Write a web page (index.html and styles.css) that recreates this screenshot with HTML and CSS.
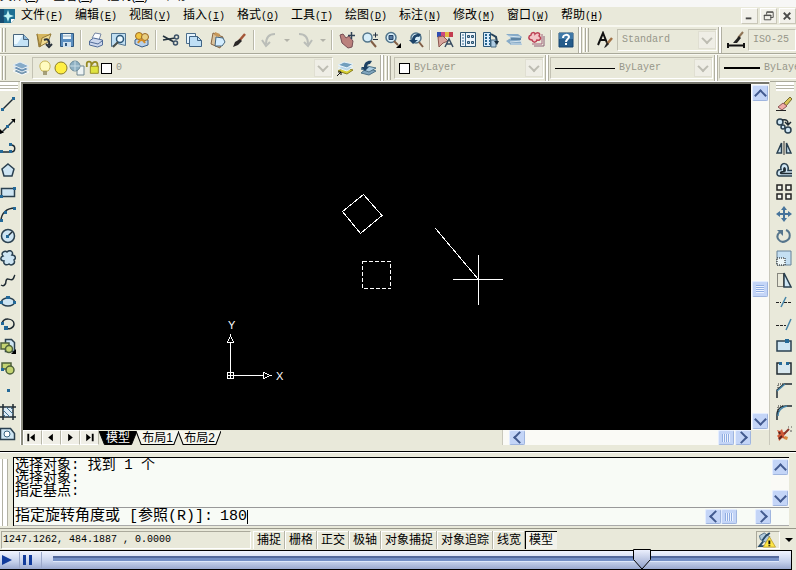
FILE: index.html
```html
<!DOCTYPE html>
<html lang="zh-CN">
<head>
<meta charset="utf-8">
<title>CAD</title>
<link rel="stylesheet" href="styles.css">
</head>
<body>
<nav class="outer-menu"><a href="#">文件(<u>F</u>)</a><a href="#">查看(<u>V</u>)</a><a href="#">控制(<u>C</u>)</a><a href="#">帮助</a></nav>

<header class="menubar">
  <svg class="app" viewBox="0 0 16 16"><path d="M0 1h15v10l-4 4H0z" fill="#1d6f93"/><path d="M0 1h4v14H0z" fill="#164b70"/><path d="M8 2l1.5 4.5L14 8l-4.500 1.500L8 14l-1.500-4.500L3 8l3.500-1.500z" fill="#bff2f4"/><path d="M11 15v-4h4z" fill="#fff"/></svg>
  <nav class="menus">
    <a href="#">文件<span>(<u>F</u>)</span></a><a href="#">编辑<span>(<u>E</u>)</span></a><a href="#">视图<span>(<u>V</u>)</span></a><a href="#">插入<span>(<u>I</u>)</span></a><a href="#">格式<span>(<u>O</u>)</span></a><a href="#">工具<span>(<u>T</u>)</span></a><a href="#">绘图<span>(<u>D</u>)</span></a><a href="#">标注<span>(<u>N</u>)</span></a><a href="#">修改<span>(<u>M</u>)</span></a><a href="#">窗口<span>(<u>W</u>)</span></a><a href="#">帮助<span>(<u>H</u>)</span></a>
  </nav>
  <div class="win">
    <button aria-label="最小化"><svg viewBox="0 0 16 16"><path d="M4 10h6" class="w"/></svg></button>
    <button aria-label="还原"><svg viewBox="0 0 16 16"><path d="M6 6V3.500h7V9h-3M3.500 6.500h7v5h-7zM6 3h7M3 7h8" class="w1"/></svg></button>
    <button aria-label="关闭"><svg viewBox="0 0 16 16"><path d="M4 4l7 7M11 4l-7 7" class="w"/></svg></button>
  </div>
</header>

<div class="toolbar">
  <i class="grip"></i>
  <button class="tb" aria-label="新建"><svg viewBox="0 0 18 18"><path d="M1.500 3.500h10l5 5v7h-15z" fill="#c4e2f6" stroke="#48657d"/><path d="M2 4h9l-6 9H2z" fill="#eefaff"/><path d="M11.500 3.500v5h5" fill="#8fbbdc" stroke="#48657d"/></svg></button>
  <button class="tb" aria-label="打开"><svg viewBox="0 0 18 18"><path d="M2 3l5 2 9-2-3 8-9 5z" fill="#f0dc92" stroke="#947a3a"/><path d="M2 3l3 13 2-9 9-4" fill="#d5b65e" stroke="#947a3a"/><path d="M9 9c4-2 6 1 5 5m-3-1l3 3 3-3" fill="none" stroke="#28313b" stroke-width="2"/></svg></button>
  <button class="tb" aria-label="保存"><svg viewBox="0 0 18 18"><path d="M2.500 2.500h13v13h-13z" fill="#5b8fc0" stroke="#31597f"/><path d="M5 3h8v5H5z" fill="#eff7fa"/><path d="M5 5h8" stroke="#91aabd"/><path d="M5 11h8v5H5z" fill="#d0e2ef"/><path d="M7 12h2v3H7z" fill="#31597f"/></svg></button>
  <i class="sep"></i>
  <button class="tb" aria-label="打印"><svg viewBox="0 0 18 18"><path d="M5 7l3-5 6 1-2 6z" fill="#fafcff" stroke="#7686a3"/><path d="M2.500 10l4-3 9 2v5l-5 2-8-2z" fill="#ccd7ec" stroke="#516c98"/><path d="M3 11l8 2 4-3" fill="none" stroke="#516c98"/></svg></button>
  <button class="tb" aria-label="打印预览"><svg viewBox="0 0 18 18"><path d="M1.500 2.500h14v12l-8-2-6 3z" fill="#c1dff2" stroke="#527591"/><circle cx="10" cy="8" r="3.500" fill="#ecf9ff" stroke="#2d5879" stroke-width="1.500"/><path d="M8 11l-5 5" stroke="#4b514c" stroke-width="2"/></svg></button>
  <button class="tb" aria-label="发布"><svg viewBox="0 0 18 18"><path d="M2 9l5-3 8 3v5l-6 2-7-3z" fill="#b8d1eb" stroke="#385c87"/><circle cx="6" cy="5" r="3.500" fill="#f1c540" stroke="#9b6825"/><circle cx="12" cy="6" r="3.500" fill="#e8ce80" stroke="#9b6825"/><path d="M5 12c2-4 5-4 7 0" fill="none" stroke="#d38c25" stroke-width="2"/></svg></button>
  <i class="sep"></i>
  <button class="tb" aria-label="剪切"><svg viewBox="0 0 18 18"><path d="M1 5l11 6M1 9l12-2" stroke="#26343f" stroke-width="1.500"/><circle cx="14.500" cy="6" r="2" fill="none" stroke="#3c5269" stroke-width="1.500"/><circle cx="13.500" cy="12" r="2" fill="none" stroke="#3c5269" stroke-width="1.500"/></svg></button>
  <button class="tb" aria-label="复制"><svg viewBox="0 0 18 18"><path d="M1.500 2.500h9v10h-9z" fill="#e6f5ff" stroke="#4b6d8a"/><path d="M4.500 5.500h8l4 4v6h-12z" fill="#bfdff5" stroke="#3f6384"/><path d="M12.500 5.500v4h4" fill="none" stroke="#3f6384"/></svg></button>
  <button class="tb" aria-label="粘贴"><svg viewBox="0 0 18 18"><path d="M5 2l10 4-3 11-9-4z" fill="#dac29b" stroke="#876440"/><path d="M8 6l7 1 2 4-3 4H7z" fill="#d3edff" stroke="#44657d"/><path d="M7 1l5 2-1 3-5-2z" fill="#c79758"/></svg></button>
  <button class="tb" aria-label="特性匹配"><svg viewBox="0 0 18 18"><path d="M14 3l-6 7" stroke="#a45638" stroke-width="2.500"/><path d="M9 8l2 2-4 4-5 2 2-5z" fill="#2a2828"/></svg></button>
  <i class="sep"></i>
  <button class="tb" aria-label="放弃"><svg viewBox="0 0 18 18" class="dim"><path d="M15 3C9 3 6 6 6 13" /><path d="M2 9l4 6 4-4"/></svg></button>
  <button class="dd" aria-label="放弃列表"></button>
  <button class="tb" aria-label="重做"><svg viewBox="0 0 18 18" class="dim"><path d="M3 3c6 0 9 3 9 10"/><path d="M8 11l4 4 4-6"/></svg></button>
  <button class="dd" aria-label="重做列表"></button>
  <i class="sep"></i>
  <button class="tb" aria-label="平移"><svg viewBox="0 0 18 18"><path d="M2 4l3-1 3 4 3-2 4 5-1 6-4 1-6-5z" fill="#bb817d" stroke="#764e55"/><path d="M13.500 1v7M10 4.500h7" stroke="#304256" stroke-width="1.500"/></svg></button>
  <button class="tb" aria-label="实时缩放"><svg viewBox="0 0 18 18"><circle cx="6.500" cy="6.500" r="4.500" class="lens"/><path d="M10 10l5 6" class="handle"/><path d="M12 4h5M14.500 1.500v5M12 8.500h5" stroke="#223041"/></svg></button>
  <button class="tb" aria-label="窗口缩放"><svg viewBox="0 0 18 18"><circle cx="7" cy="6.500" r="5" class="lens"/><path d="M5 4.500h4v4H5z" fill="#5579a0" stroke="#284668"/><path d="M10 10l4 4" class="handle"/><path d="M17 12v5h-5z"/></svg></button>
  <button class="tb" aria-label="缩放上一个"><svg viewBox="0 0 18 18"><circle cx="9" cy="7" r="5" class="lens"/><path d="M12 11l4 5" class="handle"/><path d="M5 9c0-5 5-7 9-6l-2 3c-3-1-4 1-4 3h3l-5 4-4-4z" fill="#1d4469"/></svg></button>
  <i class="sep"></i>
  <button class="tb" aria-label="特性"><svg viewBox="0 0 18 18"><path d="M1 1h4v5H1z" fill="#304fb3"/><path d="M5 1h4v5H5z" fill="#cd477f"/><path d="M9 1h4v5H9z" fill="#e1b942"/><path d="M13 1h4v5h-4z" fill="#c43d50"/><path d="M2 6l5-1 5 5-5 2-4 4z" fill="#d8a59c" stroke="#8a554f"/><path d="M9 16l4-8 4 8M11 13h4" fill="none" stroke="#374b61" stroke-width="1.500"/></svg></button>
  <button class="tb" aria-label="设计中心"><svg viewBox="0 0 18 18"><path d="M1.500 1.500h15v14h-15z" fill="#eef5fb" stroke="#2d536d"/><path d="M6.500 2v13M3 4h2M3 7h2M3 10h2M3 13h2" stroke="#376b8e"/><path d="M8.500 4.500h2v2h-2zm4 0h2v2h-2zm-4 6h2v2h-2zm4 0h2v2h-2z" fill="#8eb9d9" stroke="#2d536d"/></svg></button>
  <button class="tb" aria-label="工具选项板"><svg viewBox="0 0 18 18"><path d="M1.500 1.500h7v14h-7z" fill="#d8ecfb" stroke="#2a587b"/><path d="M3 4h2m2 0h1M3 7h2m2 0h1M3 10h2m2 0h1M3 13h2m2 0h1" stroke="#27658f" stroke-width="2"/><path d="M9 3l5 3 1 5" fill="none" stroke="#28445b" stroke-width="2"/><path d="M9 9h5v7H9z" fill="#afcde4" stroke="#496a82"/><path d="M12 10h5l-2 4z" fill="#172c3d"/></svg></button>
  <button class="tb" aria-label="图纸集"><svg viewBox="0 0 18 18"><path d="M1 3h12l4 3-2 3 2 5H6l-5-4 5-3z" fill="#87abc8"/><path d="M2 5l13 1M5 11l12-1M6 13h11" stroke="#d6e5ee"/><path d="M6 8h10" stroke="#5e84a3" stroke-width="2"/></svg></button>
  <button class="tb" aria-label="标记集"><svg viewBox="0 0 18 18"><path d="M6 15h10V5" fill="none" stroke="#8c6175"/><path d="M4 13h10V3" fill="none" stroke="#a5637c"/><path d="M3 4c0-3 4-3 4-1 3-3 6 0 4 2 3 2 1 5-2 4-1 3-4 3-5 0-4 0-4-4-1-5z" fill="#f3c5c7" stroke="#bd4155" stroke-width="1.500"/></svg></button>
  <i class="sep"></i>
  <button class="tb" aria-label="帮助"><svg viewBox="0 0 18 18"><path d="M2 2h14v14H2z" fill="#245b8a" stroke="#17456f"/><path d="M2 2h14v6H2z" fill="#3f78a7"/><path d="M6 7c0-4 6-4 6-1 0 2-3 2-3 5m0 1v2" fill="none" stroke="#fff" stroke-width="2"/></svg></button>
  <i class="edge"></i><i class="grip"></i>
  <button class="tb wide" aria-label="文字样式"><svg viewBox="0 0 18 18"><path d="M2 14L7 2l4 10M4 9h6" fill="none" stroke="#111" stroke-width="2"/><path d="M16 7l-5 6" stroke="#a17145" stroke-width="2.500"/><path d="M11 11l2 2-3 3-2 1z" fill="#222"/></svg></button>
  <label class="combo std"><select disabled aria-label="文字样式"><option>Standard</option></select><i class="drop"></i></label>
  <i class="edge"></i>
  <button class="tb wide" aria-label="标注样式"><svg viewBox="0 0 18 18"><path d="M1 12v5m16-5v5M2 14.500h14" stroke="#111" stroke-width="2"/><path d="M16 1l-5 6" stroke="#8e7355" stroke-width="2"/><path d="M12 5l2 2-4 5H6z" fill="#222"/></svg></button>
  <label class="combo rest"><select disabled aria-label="标注样式"><option>ISO-25</option></select></label>
</div>

<div class="toolbar">
  <i class="grip"></i>
  <button class="tb" aria-label="图层特性"><svg viewBox="0 0 18 18"><path d="M1 12l7-3 9 4-7 3z" fill="#7697b0" stroke="#fff"/><path d="M1 9l7-3 9 4-7 3z" fill="#6b91b3" stroke="#e5eef5"/><path d="M1 6l7-3 9 4-7 3z" fill="#86abc9" stroke="#e5eef5"/></svg></button>
  <label class="combo layer">
    <svg viewBox="0 0 16 18"><path d="M5 12C1 8 3 2 8 2s7 6 3 10z" fill="#fffbc0" stroke="#c8b657"/><path d="M6 13h4M6 15h4" stroke="#8f865b" stroke-width="1.500"/></svg>
    <svg viewBox="0 0 16 18"><circle cx="8" cy="9" r="6" fill="#ffef43" stroke="#8b7c27"/></svg>
    <svg viewBox="0 0 16 18"><path d="M8 7h7v9H8z" fill="#eef4f4" stroke="#718791"/><circle cx="6" cy="7" r="5" fill="#8eb0c3" stroke="#6d8c9c"/><path d="M6 2v10M1 7h10" stroke="#c7dce5"/></svg>
    <svg viewBox="0 0 18 18"><path d="M2 8V4c0-3 5-3 5 0v5M8 5c1-4 6-4 6 0v4" fill="none" stroke="#968a22" stroke-width="2"/><path d="M6 7h9v8H6z" fill="#dfe340" stroke="#90871d"/></svg>
    <i class="swatch"></i>
    <select disabled aria-label="图层"><option>0</option></select><i class="drop"></i>
  </label>
  <button class="tb" aria-label="置为当前"><svg viewBox="0 0 18 18"><path d="M2 12l6-3 9 2-6 4z" fill="#d7cf32" stroke="#897f20"/><path d="M2 9l6-3 9 2-6 4z" fill="#b9d7e9" stroke="#e8f4fb"/><path d="M2 6l6-3 9 2-6 4z" fill="#729fbd" stroke="#e8f4fb"/><path d="M1 17l4-4M2 13h3v3" fill="none" stroke="#111"/></svg></button>
  <button class="tb" aria-label="上一个图层"><svg viewBox="0 0 18 18"><path d="M2 14l6-5 9 3-7 4z" fill="#80a5bd" stroke="#4d7186"/><path d="M2 10l6-3 9 2-7 4z" fill="#abcce0" stroke="#4d7186"/><path d="M5 8c0-5 4-7 8-6l-2 3c-2 0-3 1-3 3h2l-4 4-4-4z" fill="#1d4264"/></svg></button>
  <i class="edge"></i><i class="grip"></i>
  <label class="combo color"><i class="swatch"></i><select disabled aria-label="颜色"><option>ByLayer</option></select><i class="drop"></i></label>
  <i class="edge"></i>
  <label class="combo ltype"><i class="rule"></i><select disabled aria-label="线型"><option>ByLayer</option></select><i class="drop"></i></label>
  <i class="edge"></i>
  <label class="combo rest"><i class="rule thick"></i><select disabled aria-label="线宽"><option>ByLayer</option></select></label>
</div>

<main class="work">
  <aside class="side left"><i class="hgrip"></i>
    <button aria-label="直线"><svg viewBox="0 0 16 16"><path d="M2 14L14 2" class="k"/><path d="M1 12h3v3H1zM12 1h3v3h-3z" class="p"/></svg></button>
    <button aria-label="构造线"><svg viewBox="0 0 16 16"><path d="M0 16L15 1" class="k"/><path d="M15 1v4l-4-4zM0 15v-4l4 4z"/><path d="M6 7h3v3H6z" class="p"/></svg></button>
    <button aria-label="多段线"><svg viewBox="0 0 16 16"><path d="M1 12h10c5 0 5-7 0-7" class="k"/><path d="M0 10h3v3H0zM9 10h3v3H9zM9 3h3v3H9z" class="p"/></svg></button>
    <button aria-label="正多边形"><svg viewBox="0 0 16 16"><path d="M8 2l6 5-2 7H4L2 7z" class="f"/></svg></button>
    <button aria-label="矩形"><svg viewBox="0 0 16 16"><path d="M1.500 4.500h13v8h-13z" class="f"/><path d="M0 11h3v3H0zM13 3h3v3h-3z" class="p"/></svg></button>
    <button aria-label="圆弧"><svg viewBox="0 0 16 16"><path d="M1 15C1 7 7 2 15 2" class="k"/><path d="M0 13h3v3H0zM4 5h3v3H4zM13 1h3v3h-3z" class="p"/></svg></button>
    <button aria-label="圆"><svg viewBox="0 0 16 16"><circle cx="8" cy="8" r="6.500" class="f"/><path d="M7 9l5-5" class="k"/><path d="M6 7h3v3H6z" class="p"/></svg></button>
    <button aria-label="修订云线"><svg viewBox="0 0 16 16"><path d="M3 6C0 3 5 0 7 2c3-3 7 0 5 3 4 0 4 4 2 5 2 4-3 6-5 4-3 2-6 0-5-3-4 0-4-4-1-5z" class="f"/></svg></button>
    <button aria-label="样条曲线"><svg viewBox="0 0 16 16"><path d="M1 13c3 2 5-1 5-4 1-5 5 1 7-2 1-1 1-3 2-4" class="k"/></svg></button>
    <button aria-label="椭圆"><svg viewBox="0 0 16 16"><ellipse cx="8" cy="8" rx="6.500" ry="4" class="f"/><path d="M0 7h3v3H0zM13 7h3v3h-3zM6 2h4v3H6z" class="p"/></svg></button>
    <button aria-label="椭圆弧"><svg viewBox="0 0 16 16"><path d="M2 8c1-7 12-6 12 0 0 4-5 6-9 4" class="k"/><path d="M1 6h3v3H1zM4 10h4v4H4z" class="p"/></svg></button>
    <button aria-label="插入块"><svg viewBox="0 0 16 16"><path d="M5.500 1.500h6l3 3v9h-9z" class="f"/><path d="M1 5h8v6H1z" class="g"/><circle cx="9" cy="11" r="3.500" class="g"/><path d="M16 11v5h-5z"/></svg></button>
    <button aria-label="创建块"><svg viewBox="0 0 16 16"><path d="M2 3h9v6H2z" class="g"/><circle cx="10" cy="10" r="4" class="g"/><path d="M1 8h3v3H1z" class="p"/></svg></button>
    <button aria-label="点"><svg viewBox="0 0 16 16"><path d="M7 7h3v3H7z" class="p"/></svg></button>
    <button aria-label="图案填充"><svg viewBox="0 0 16 16"><path d="M3 3h10v10H3z" fill="#dceaf4"/><path d="M3 0v16M13 0v16M0 3h16M0 13h16" class="k"/><path d="M3 6l7 7M3 10l3 3M6 3l7 7M10 3l3 3" stroke="#427291"/></svg></button>
    <button aria-label="面域"><svg viewBox="0 0 16 16"><path d="M.5 2.500h10l4 5v6H.500z" class="f"/><circle cx="7" cy="8" r="3" fill="#fff" stroke="#396582"/></svg></button>
  </aside>

  <section class="doc">
    <div class="view">
      <svg class="drawing" aria-label="绘图区">
        <g fill="none" stroke="#fff" shape-rendering="crispEdges">
          <path d="M339.500 110.500L358 131.500L336.500 149.500L318.500 127.500z"/>
          <path d="M338.500 177.500h28v27h-28z" stroke-dasharray="4 2"/>
          <path d="M411.500 144.500L454.500 195.500M429 195.500h50M454.500 171v50"/>
          <path d="M203.500 288.500h6v6h-6zM203 291.500h36M206.500 295V259M203.500 258.500h6l-3-7zM239.500 288.500v6l7-3z"/>
        </g>
        <text x="204" y="245">Y</text><text x="252" y="296">X</text>
      </svg>
      <div class="vscroll"><button class="sb up" aria-label="向上"></button><i class="sb thumb v"></i><button class="sb down" aria-label="向下"></button></div>
    </div>
    <div class="sheets">
      <div class="steps">
        <button aria-label="第一个"><svg viewBox="0 0 16 14"><path d="M3 3h2v8H3zM11 3v8L6 7z"/></svg></button>
        <button aria-label="上一个"><svg viewBox="0 0 16 14"><path d="M10 3v8L5 7z"/></svg></button>
        <button aria-label="下一个"><svg viewBox="0 0 16 14"><path d="M6 3v8l5-4z"/></svg></button>
        <button aria-label="最后一个"><svg viewBox="0 0 16 14"><path d="M5 3v8l5-4zM11 3h2v8h-2z"/></svg></button>
      </div>
      <div class="tabs">
        <button class="on"><svg viewBox="0 0 42 14" preserveAspectRatio="none"><path d="M0 0h42l-6 13.500H6z" fill="#000"/></svg><span>模型</span></button>
        <button><svg viewBox="0 0 42 14" preserveAspectRatio="none"><path d="M0 0l5 13.500h32L42 0"/></svg><span>布局1</span></button>
        <button><svg viewBox="0 0 42 14" preserveAspectRatio="none"><path d="M0 0l5 13.500h32L42 0"/></svg><span>布局2</span></button>
      </div>
      <div class="hscroll"><button class="sb lt" aria-label="向左"></button><i class="sb thumb h"></i><button class="sb rt" aria-label="向右"></button></div>
    </div>
  </section>

  <aside class="side right"><i class="hgrip"></i>
    <button aria-label="删除"><svg viewBox="0 0 16 16"><path d="M8 7l6-6 2 2-6 7z" fill="#d9c455" stroke="#746b30"/><path d="M2 11l5-4 4 3-5 4z" fill="#f1aca8" stroke="#8e5656"/><path d="M0 14.500h10" stroke="#222"/></svg></button>
    <button aria-label="复制对象"><svg viewBox="0 0 16 16"><circle cx="4" cy="4" r="3" class="f"/><circle cx="7" cy="9" r="2" class="f"/><circle cx="12" cy="12" r="3" class="f"/><path d="M6 2c5-1 6 1 6 4M9 4l3 3 3-3" class="k"/></svg></button>
    <button aria-label="镜像"><svg viewBox="0 0 16 16"><path d="M5.500 3v10H1zM10.500 3v10H15z" class="f"/><path d="M8 1v14" stroke="#333"/></svg></button>
    <button aria-label="偏移"><svg viewBox="0 0 16 16"><path d="M16 8.500h-4c2-9-9-9-7-1C0 7 0 14 3 14h13" class="f"/><path d="M16 11.500H5c-1-1 0-2 3-2-1-5 2-5 1 0" class="k"/></svg></button>
    <button aria-label="阵列"><svg viewBox="0 0 16 16"><path d="M1 1h5v5H1zM10 1h5v5h-5zM1 10h5v5H1zM10 10h5v5h-5z" fill="#f2f4ed" stroke="#222" stroke-width="1.500"/></svg></button>
    <button aria-label="移动"><svg viewBox="0 0 16 16"><path d="M8 0l3 4H9v3h3V5l4 3-4 3V9H9v3h2l-3 4-3-4h2V9H4v2L0 8l4-3v2h3V4H5z" fill="#46739b"/></svg></button>
    <button aria-label="旋转"><svg viewBox="0 0 16 16"><path d="M4 4c-6 5 0 12 6 9 5-2 5-9 0-11" fill="none" stroke="#56758c" stroke-width="2"/><path d="M1 2h6v6z" fill="#56758c"/></svg></button>
    <button aria-label="缩放"><svg viewBox="0 0 16 16"><path d="M1 1h14v14H1z" fill="#c4dff2" stroke="#668298"/><path d="M1 8h8v7H1z" fill="#eef7f8" stroke="#111" stroke-dasharray="1 1"/></svg></button>
    <button aria-label="拉伸"><svg viewBox="0 0 16 16"><path d="M8 1l7 14H8z" class="f"/><path d="M1.500 1.500h6v13h-6z" fill="none" stroke="#222" stroke-dasharray="1 1"/></svg></button>
    <button aria-label="修剪"><svg viewBox="0 0 16 16"><path d="M0 8.500h5m3 0h8" stroke="#222" stroke-dasharray="3 1"/><path d="M10 3L5 13" class="p2"/></svg></button>
    <button aria-label="延伸"><svg viewBox="0 0 16 16"><path d="M0 9.500h10" stroke="#222" stroke-dasharray="3 1"/><path d="M15 3l-5 11" class="p2"/></svg></button>
    <button aria-label="打断于点"><svg viewBox="0 0 16 16"><path d="M1 3h14v10H1z" class="f"/><path d="M9 1h4v4H9z" class="p"/></svg></button>
    <button aria-label="打断"><svg viewBox="0 0 16 16"><path d="M2 4h12v9H2z" fill="#d8e8ef"/><path d="M4 3H1v11h14V3h-3" class="k"/><path d="M3 2h3v3H3zM10 2h3v3h-3z" class="p"/></svg></button>
    <button aria-label="倒角"><svg viewBox="0 0 16 16"><path d="M1 16V8l7-6h8" class="k"/><path d="M2 8V2h6" fill="none" stroke="#222" stroke-dasharray="1 1"/><path d="M1 9l8-7" class="p2"/></svg></button>
    <button aria-label="圆角"><svg viewBox="0 0 16 16"><path d="M1 16v-5c0-6 4-9 9-9h6" class="k"/><path d="M2 12c0-6 4-9 9-10" class="p2"/><path d="M2 8V2h6" fill="none" stroke="#222" stroke-dasharray="1 1"/></svg></button>
    <button aria-label="分解"><svg viewBox="0 0 16 16"><path d="M1 4l3 1 2-2 1 3 3 1-2 3 2 3-4-1-3 3-1-4-1-1 2-2z" fill="#cf5937"/><path d="M9 10l3 1-1 3-3-1z" fill="#d78a3c"/><path d="M3 6l1 2M3 13l3-3" stroke="#5b241d" stroke-width="2"/><path d="M8 8l5-5" stroke="#8b3427" stroke-width="2"/><path d="M12 1h1m2 0h1m-2 4h2" stroke="#555"/></svg></button>
  </aside>
</main>

<section class="command">
  <i class="vgrip"></i>
  <div class="console">
    <div class="history"><p>选择对象: 找到 1 个<br>选择对象:<br>指定基点:</p><div class="vscroll"><button class="sb up" aria-label="向上"></button><button class="sb down" aria-label="向下"></button></div></div>
    <div class="prompt"><label for="cmd">指定旋转角度或 [参照(R)]:</label><span class="entry"><input id="cmd" size="3" value="180"></span><div class="pscroll"><button class="sb lt" aria-label="向左"></button><i class="sb thumb h"></i><button class="sb rt" aria-label="向右"></button></div></div>
  </div>
</section>

<footer class="status">
  <output>1247.1262, 484.1887 , 0.0000</output>
  <div class="modes"><button>捕捉</button><button>栅格</button><button>正交</button><button>极轴</button><button>对象捕捉</button><button>对象追踪</button><button>线宽</button><button class="pressed">模型</button></div>
  <div class="tray"><svg viewBox="0 0 20 18"><path d="M2 4l5-3 6 4-4 6-6-3z" fill="#b1cadb" stroke="#547186"/><path d="M5 9l4-5 4-3M6 10l-4 5h6" fill="none" stroke="#274967" stroke-width="2"/><path d="M12.500 5L19 16H6z" fill="#ffe743" stroke="#c1a638"/><path d="M12.500 9v4m0 1v1" stroke="#111" stroke-width="2"/></svg></div>
  <button class="more" aria-label="状态栏菜单"></button>
</footer>

<div class="player">
  <button class="play" aria-label="播放"><svg viewBox="0 0 16 16"><path d="M2 3l10 5-10 5z" fill="#123c9c"/></svg></button>
  <button class="pause" aria-label="暂停"><svg viewBox="0 0 16 16"><path d="M3 3h3v10H3zM9 3h3v10H9z" fill="#123c9c"/></svg></button>
  <input type="range" min="0" max="1000" value="819" aria-label="进度">
</div>
</body>
</html>
```
FILE: styles.css
```css
* { box-sizing: border-box; }
body {
  margin: 0;
  height: 100vh;
  display: flex;
  flex-direction: column;
  overflow: hidden;
  background: #e9e9da;
  color: #000;
  font: 12px/14px "Liberation Sans", "Noto Sans CJK SC", sans-serif;
}
button { margin: 0; padding: 0; border: 0; background: none; color: inherit; font: inherit; flex: none; }
svg { display: block; flex: none; }
a { color: inherit; text-decoration: none; white-space: nowrap; }
i { flex: none; }

.outer-menu {
  height: 7px;
  flex: none;
  display: flex;
  align-items: flex-end;
  gap: 14px;
  padding-bottom: 4px;
  overflow: hidden;
  background: #f7f7f6;
}
.menubar { flex: none; height: 19px; display: flex; align-items: center; border-bottom: 1px solid #f8f8f0; }
.app { width: 16px; height: 16px; margin-right: 5px; }
.menus { display: grid; grid-template-columns: repeat(11, 54px); flex: 1; }
.menus span { font: 10px/14px "Liberation Mono", monospace; }
.win { display: flex; gap: 2px; }
.win button { width: 17px; height: 16px; background: #f2f1ea; border: 1px solid #fff; border-right-color: #c9c7b8; border-bottom-color: #c9c7b8; }
.w { fill: none; stroke: #4a4a48; stroke-width: 2; }
.w1 { fill: none; stroke: #4a4a48; }

.toolbar {
  flex: none;
  height: 28px;
  display: flex;
  align-items: center;
  border-top: 1px solid #f8f8f0;
  border-bottom: 1px solid #a9a99a;
  overflow: hidden;
}
.grip { width: 9px; height: 24px; background: linear-gradient(90deg, #fff 1px, transparent 1px 2px, #aaa99b 2px 3px, #fff 3px 4px, transparent 4px 5px, #aaa99b 5px 6px, transparent 6px); }
.tb { width: 23px; height: 22px; display: grid; place-items: center; }
.tb svg { width: 18px; height: 18px; }
.wide { width: 25px; }
.sep { width: 6px; height: 20px; background: linear-gradient(90deg, transparent 2px, #b9b8a9 2px 3px, #fff 3px 4px, transparent 4px); }
.dim { fill: none; stroke: #babdb8; stroke-width: 2; }
.lens { fill: #d7eef9; stroke: #52758b; stroke-width: 1.500; }
.handle { fill: none; stroke: #815e45; stroke-width: 2; }
.dd { width: 13px; height: 20px; display: grid; place-items: center; }
.dd::after { content: ""; border: 3px solid transparent; border-top-color: #b3b3a9; border-bottom: 0; }
.edge { width: 6px; height: 26px; background: linear-gradient(90deg, transparent 1px, #b1b0a2 1px 2px, #fff 2px 4px, #b1b0a2 4px 5px, transparent 5px); }
.combo { height: 22px; display: flex; align-items: center; padding-left: 4px; border: 1px solid #c3c2b3; border-right-color: #fff; border-bottom-color: #fff; flex: none; }
.combo select { appearance: none; flex: 1; min-width: 0; padding: 0; border: 0; background: none; color: #969689; opacity: 1; font: 10px/14px "Liberation Mono", monospace; }
.combo svg { width: 16px; height: 18px; }
.std { width: 100px; }
.layer { width: 301px; }
.color { width: 150px; }
.ltype { width: 163px; }
.rest { flex: 1; }
.swatch { width: 11px; height: 11px; margin-right: 4px; border: 1px solid #000; background: #fff; }
.drop { width: 18px; height: 18px; display: grid; place-items: center; background: #efeee6; border: 1px solid #e0dfd2; }
.drop::after { content: ""; width: 6px; height: 6px; border: solid #bdbcb2; border-width: 0 2px 2px 0; transform: rotate(45deg) translate(-1px, -1px); }
.rule { width: 60px; height: 1px; margin-right: 4px; background: #000; }
.thick { width: 36px; height: 2px; }

.work { flex: 1; min-height: 0; display: flex; }
.side { flex: none; display: flex; flex-direction: column; overflow: hidden; }
.side button { height: 22px; width: 16px; display: grid; place-items: center; }
.side svg { width: 16px; height: 16px; }
.hgrip { height: 11px; width: 18px; background: linear-gradient(#fff 3px, #b5b4a6 3px 4px, #fff 4px 6px, #b5b4a6 6px 7px, #fff 7px 9px, transparent 9px); }
.left { width: 21px; }
.right { width: 27px; padding-left: 6px; border-left: 1px solid #c9c8bb; }
.k { fill: none; stroke: #1f2b33; stroke-width: 1.500; }
.p { fill: #246998; }
.p2 { fill: none; stroke: #4685a8; stroke-width: 1.500; }
.f { fill: #cee5f3; stroke: #2a4050; stroke-width: 1.500; }
.g { fill: #c4d472; stroke: #4d603b; stroke-width: 1.500; }
.doc { flex: 1; min-width: 0; display: flex; flex-direction: column; border-left: 2px solid #8d8d81; border-top: 2px solid #77776d; outline: 1px solid #fff; }
.view { flex: 1; min-height: 0; display: flex; background: #000; }
.drawing { flex: 1; min-width: 0; height: 100%; margin-left: 1px; }
.drawing text { fill: #fff; font: 11px "Liberation Sans", sans-serif; }
.vscroll { width: 18px; flex: none; padding: 1px; display: flex; flex-direction: column; justify-content: space-between; align-items: center; background: #fafaf6; }
.sb { width: 16px; height: 16px; display: grid; place-items: center; background: #c4d5f7; border: 1px solid #e4edff; border-right-color: #9fb5df; border-bottom-color: #9fb5df; border-radius: 2px; }
.sb::after { content: ""; width: 7px; height: 7px; border: solid #425a8f; border-width: 2px 0 0 2px; }
.up::after { transform: translateY(2px) rotate(45deg); }
.down::after { transform: translateY(-2px) rotate(225deg); }
.lt::after { transform: translateX(2px) rotate(-45deg); }
.rt::after { transform: translateX(-2px) rotate(135deg); }
.thumb.sb::after { width: 8px; height: 8px; border: 0; transform: none; background: repeating-linear-gradient(90deg, #91aee2 0 1px, #edf3ff 1px 2px); }
.thumb.v::after { background: repeating-linear-gradient(#91aee2 0 1px, #edf3ff 1px 2px); }
.view .thumb { margin-top: 64px; }
.sheets { flex: none; height: 15px; display: flex; }
.steps { display: flex; width: 76px; }
.steps button { width: 19px; height: 15px; border: 1px solid #fff; border-right-color: #b7b6a8; background: #f0efe7; }
.steps svg { width: 16px; height: 13px; }
.tabs { display: flex; flex: 1; }
.tabs button { display: grid; place-items: center; width: 43px; height: 15px; margin-right: -1px; white-space: nowrap; }
.tabs button svg, .tabs button span { grid-area: 1 / 1; }
.tabs svg { width: 100%; height: 14px; fill: #f6f6ee; stroke: #000; }
.tabs button.on { color: #fff; width: 38px; }
.hscroll { width: 249px; display: flex; align-items: center; padding-left: 6px; border-left: 1px solid #c9c8bb; margin-right: 18px; background: #fafaf6; }
.hscroll .sb, .pscroll .sb { height: 15px; }
.hscroll .thumb { margin-left: auto; margin-right: 1px; }

.command { flex: none; height: 83px; display: flex; padding: 0 7px 2px 0; border-top: 6px solid #e9e9da; box-shadow: inset 0 1px #000, inset 0 2px #fff; }
.vgrip { width: 13px; margin-top: 8px; background: linear-gradient(90deg, #fff 2px, #b2b1a4 2px 3px, #fff 3px 7px, #b2b1a4 7px 8px, transparent 8px); }
.console { flex: 1; min-width: 0; margin-top: 6px; display: flex; flex-direction: column; background: #f8fbf6; border: solid #000; border-width: 1px 0 0 1px; font: 15px/13px "Liberation Mono", "Noto Sans CJK SC", monospace; }
.history { flex: 1; display: flex; justify-content: space-between; border-bottom: 1px solid #999; }
.history p { margin: 0; padding: 1px; font-size: 14px; }
.prompt { flex: none; height: 18px; display: flex; align-items: center; padding-left: 1px; border-bottom: 1px solid #aaa; }
.prompt label { white-space: pre; }
.entry { flex: 1; min-width: 0; display: flex; margin-left: 7px; }
.prompt input { width: 28px; height: 14px; padding: 0; border: 0; border-right: 1px solid #000; outline: 0; background: none; color: inherit; font: inherit; }
.pscroll { display: flex; width: 84px; padding-right: 18px; }
.pscroll .rt { margin-left: auto; }

.status { flex: none; height: 22px; display: flex; align-items: center; gap: 2px; padding-left: 1px; border-top: 1px solid #98978a; }
.status output { width: 250px; height: 18px; padding-left: 1px; border: 1px solid #aaa99b; border-right-color: #fff; border-bottom-color: #fff; font: 10px/16px "Liberation Mono", monospace; }
.modes { display: flex; flex: 1; }
.modes button { height: 18px; padding: 0 4px; white-space: nowrap; box-shadow: inset -1px 0 #b6b5a7, inset 1px 1px #fff; }
.modes .pressed { background: #f3f3ec; box-shadow: inset 1px 1px #000; }
.tray { width: 24px; height: 18px; border: 1px solid #aaa99b; border-right-color: #fff; border-bottom-color: #fff; }
.tray svg { width: 20px; height: 17px; }
.more { width: 14px; display: grid; place-items: center; }
.more::after { content: ""; border: 4px solid transparent; border-top-color: #000; border-bottom: 0; }

.player { flex: none; height: 20px; display: flex; align-items: center; margin-right: 4px; padding-right: 12px; border: solid #000; border-width: 1px 1px 1px 0; background: linear-gradient(#f1f5ff, #c4d0eb 60%, #9aa9cf); }
.player svg { width: 16px; height: 16px; }
.play { width: 20px; box-shadow: inset -1px 0 #9ca9ca; }
.pause { width: 22px; box-shadow: inset -1px 0 #9ca9ca; }
.player input { appearance: none; flex: 1; min-width: 0; height: 18px; margin: 0 0 0 11px; background: linear-gradient(transparent 5px, #53699c 5px 7px, #7590c6 7px 10px, #dce7fa 10px 11px, transparent 11px); }
.player input::-webkit-slider-thumb {
  appearance: none;
  width: 18px;
  height: 21px;
  margin-top: -2px;
  background: url("data:image/svg+xml,%3Csvg xmlns='http://www.w3.org/2000/svg' viewBox='0 0 18 21'%3E%3ClinearGradient id='a' x2='0' y2='1'%3E%3Cstop stop-color='%23eef2ff'/%3E%3Cstop offset='1' stop-color='%238e9fca'/%3E%3C/linearGradient%3E%3Cpath d='M.5.5h17v10L9 20 .5 10.500z' fill='url(%23a)' stroke='%23000'/%3E%3C/svg%3E") no-repeat;
}
```
